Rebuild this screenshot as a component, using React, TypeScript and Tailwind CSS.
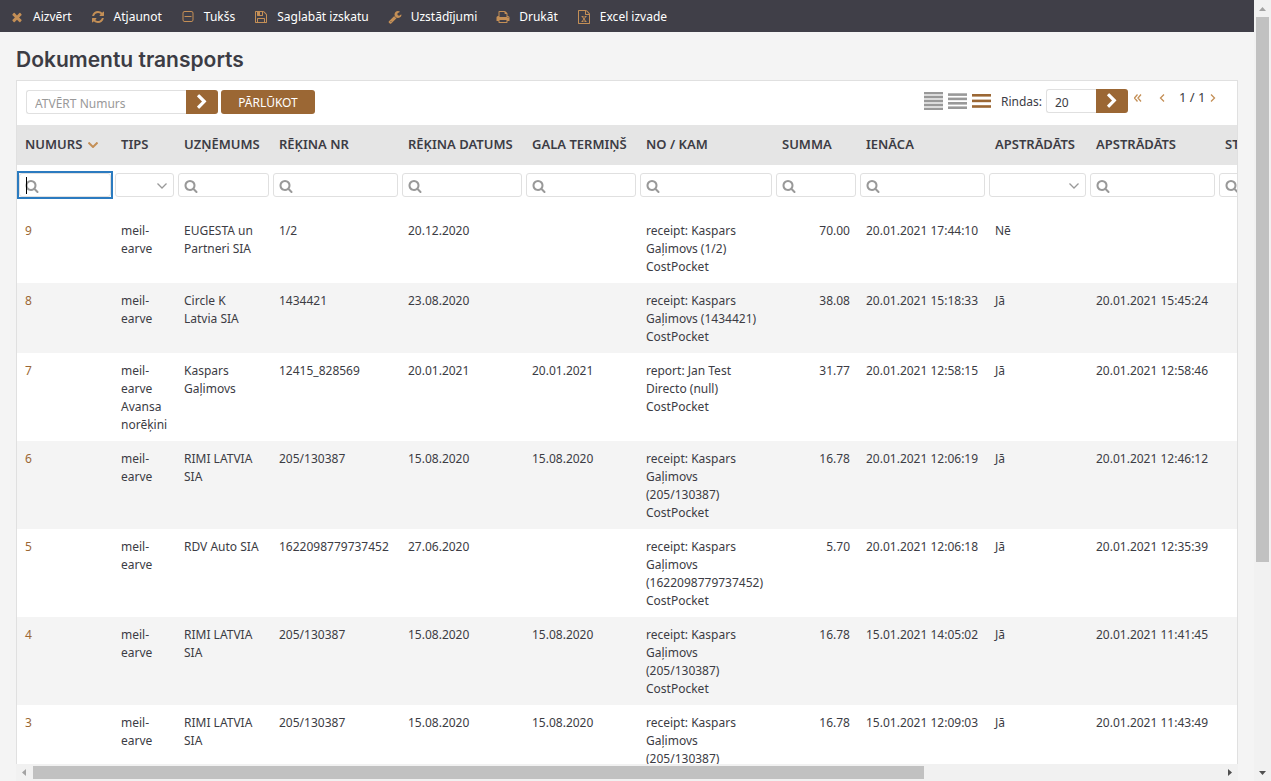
import React from "react";

const ICONS = {
  times: "M1490 1322q0 40-28 68l-136 136q-28 28-68 28t-68-28l-294-294-294 294q-28 28-68 28t-68-28l-136-136q-28-28-28-68t28-68l294-294-294-294q-28-28-28-68t28-68l136-136q28-28 68-28t68 28l294 294 294-294q28-28 68-28t68 28l136 136q28 28 28 68t-28 68l-294 294 294 294q28 28 28 68z",
  refresh: "M1639 1056q0 5-1 7-64 268-268 434.5t-478 166.5q-146 0-282.5-55t-243.5-157l-129 129q-19 19-45 19t-45-19-19-45v-448q0-26 19-45t45-19h448q26 0 45 19t19 45-19 45l-137 137q71 66 161 102t187 36q134 0 250-65t186-179q11-17 53-117 8-23 30-23h192q13 0 22.5 9.5t9.5 22.5zm25-800v448q0 26-19 45t-45 19h-448q-26 0-45-19t-19-45 19-45l138-138q-148-137-349-137-134 0-250 65t-186 179q-11 17-53 117-8 23-30 23h-199q-13 0-22.5-9.5t-9.5-22.5v-7q65-268 270-434.5t480-166.5q146 0 284 55.5t245 156.5l130-129q19-19 45-19t45 19 19 45z",
  minusSquare: "M1344 800v64q0 14-9 23t-23 9h-832q-14 0-23-9t-9-23v-64q0-14 9-23t23-9h832q14 0 23 9t9 23zm128 448v-832q0-66-47-113t-113-47h-832q-66 0-113 47t-47 113v832q0 66 47 113t113 47h832q66 0 113-47t47-113zm128-832v832q0 119-84.5 203.5t-203.5 84.5h-832q-119 0-203.5-84.5t-84.5-203.5v-832q0-119 84.5-203.5t203.5-84.5h832q119 0 203.5 84.5t84.5 203.5z",
  floppy: "M512 1536h768v-384h-768v384zm896 0h128v-896q0-14-10-38.5t-20-34.5l-281-281q-10-10-34-20t-39-10v416q0 40-28 68t-68 28h-576q-40 0-68-28t-28-68v-416h-128v1280h128v-416q0-40 28-68t68-28h832q40 0 68 28t28 68v416zm-384-928v-320q0-13-9.5-22.5t-22.5-9.5h-192q-13 0-22.5 9.5t-9.5 22.5v320q0 13 9.5 22.5t22.5 9.5h192q13 0 22.5-9.5t9.5-22.5zm640 32v928q0 40-28 68t-68 28h-1344q-40 0-68-28t-28-68v-1344q0-40 28-68t68-28h928q40 0 88 20t76 48l280 280q28 28 48 76t20 88z",
  wrench: "M448 1472q0-26-19-45t-45-19-45 19-19 45 19 45 45 19 45-19 19-45zm644-420l-682 682q-37 37-90 37-52 0-91-37l-106-108q-38-36-38-90 0-53 38-91l681-681q39 98 114.5 173.5t173.5 114.5zm634-435q0 39-23 106-47 134-164.5 217.5t-258.5 83.5q-185 0-316.5-131.5t-131.5-316.5 131.5-316.5 316.5-131.5q58 0 121.5 16.5t107.5 46.5q16 11 16 28t-16 28l-293 169v224l193 107q5-3 79-48.5t135.5-81 70.5-35.5q15 0 23.5 10t8.5 25z",
  print: "M448 1536h896v-256h-896v256zm0-640h896v-384h-160q-40 0-68-28t-28-68v-160h-640v640zm1152 64q0-26-19-45t-45-19-45 19-19 45 19 45 45 19 45-19 19-45zm128 0v416q0 13-9.5 22.5t-22.5 9.5h-224v160q0 40-28 68t-68 28h-960q-40 0-68-28t-28-68v-160h-224q-13 0-22.5-9.5t-9.5-22.5v-416q0-79 56.5-135.5t135.5-56.5h64v-544q0-40 28-68t68-28h672q40 0 88 20t76 48l152 152q28 28 48 76t20 88v256h64q79 0 135.5 56.5t56.5 135.5z",
  excel: "M1596 380q28 28 48 76t20 88v1152q0 40-28 68t-68 28h-1344q-40 0-68-28t-28-68v-1600q0-40 28-68t68-28h896q40 0 88 20t76 48zm-444-244v376h376q-10-29-22-41l-313-313q-12-12-41-22zm384 1528v-1024h-416q-40 0-68-28t-28-68v-416h-768v1536h1280zm-979-234v106h281v-106h-75l103-161q5-7 10-16.5t7.5-13.5 3.5-4h2q1 4 5 10 2 4 4.5 7.5t6 8 6.5 8.5l107 161h-76v106h291v-106h-68l-192-273 195-282h67v-107h-279v107h74l-103 159q-4 7-10 16.5t-9 13.5l-2 3h-2q-1-4-5-10-6-11-17-23l-106-159h76v-107h-290v107h68l189 272-194 283h-68z",
  search: "M1216 832q0-185-131.5-316.5t-316.5-131.5-316.5 131.5-131.5 316.5 131.5 316.5 316.5 131.5 316.5-131.5 131.5-316.5zm512 832q0 52-38 90t-90 38q-54 0-90-38l-343-342q-179 124-399 124-143 0-273.5-55.5t-225-150-150-225-55.5-273.5 55.5-273.5 150-225 225-150 273.5-55.5 273.5 55.5 225 150 150 225 55.5 273.5q0 220-124 399l343 343q37 37 37 90z",
  chevron: "M1363 877l-742 742q-19 19-45 19t-45-19l-166-166q-19-19-19-45t19-45l531-531-531-531q-19-19-19-45t19-45l166-166q19-19 45-19t45 19l742 742q19 19 19 45t-19 45z",
};

function Icon({ name, className }: { name: keyof typeof ICONS; className: string }) {
  return (
    <svg viewBox="0 0 1792 1792" fill="currentColor" aria-hidden="true" className={className}>
      <path d={ICONS[name]} />
    </svg>
  );
}

function Line({ d, box, className }: { d: string; box: string; className: string }) {
  return (
    <svg viewBox={box} fill="none" stroke="currentColor" strokeWidth="1.3" aria-hidden="true" className={className}>
      <path d={d} />
    </svg>
  );
}

const ACTIONS: { icon: keyof typeof ICONS; label: string }[] = [
  { icon: "times", label: "Aizvērt" },
  { icon: "refresh", label: "Atjaunot" },
  { icon: "minusSquare", label: "Tukšs" },
  { icon: "floppy", label: "Saglabāt izskatu" },
  { icon: "wrench", label: "Uzstādījumi" },
  { icon: "print", label: "Drukāt" },
  { icon: "excel", label: "Excel izvade" },
];

const COLUMNS: { label: string; col: string; filter: "text" | "select" }[] = [
  { label: "NUMURS", col: "w-[96px]", filter: "text" },
  { label: "TIPS", col: "w-[63px]", filter: "select" },
  { label: "UZŅĒMUMS", col: "w-[95px]", filter: "text" },
  { label: "RĒĶINA NR", col: "w-[129px]", filter: "text" },
  { label: "RĒĶINA DATUMS", col: "w-[124px]", filter: "text" },
  { label: "GALA TERMIŅŠ", col: "w-[114px]", filter: "text" },
  { label: "NO / KAM", col: "w-[136px]", filter: "text" },
  { label: "SUMMA", col: "w-[84px]", filter: "text" },
  { label: "IENĀCA", col: "w-[129px]", filter: "text" },
  { label: "APSTRĀDĀTS", col: "w-[101px]", filter: "select" },
  { label: "APSTRĀDĀTS", col: "w-[129px]", filter: "text" },
  { label: "STATUSS", col: "w-[431px]", filter: "text" },
];

const ROWS: string[][] = [
  ["9", "meil-\nearve", "EUGESTA un\nPartneri SIA", "1/2", "20.12.2020", "", "receipt: Kaspars\nGaļimovs (1/2)\nCostPocket", "70.00", "20.01.2021 17:44:10", "Nē", ""],
  ["8", "meil-\nearve", "Circle K\nLatvia SIA", "1434421", "23.08.2020", "", "receipt: Kaspars\nGaļimovs (1434421)\nCostPocket", "38.08", "20.01.2021 15:18:33", "Jā", "20.01.2021 15:45:24"],
  ["7", "meil-\nearve\nAvansa\nnorēķini", "Kaspars\nGaļimovs", "12415_828569", "20.01.2021", "20.01.2021", "report: Jan Test\nDirecto (null)\nCostPocket", "31.77", "20.01.2021 12:58:15", "Jā", "20.01.2021 12:58:46"],
  ["6", "meil-\nearve", "RIMI LATVIA\nSIA", "205/130387", "15.08.2020", "15.08.2020", "receipt: Kaspars\nGaļimovs\n(205/130387)\nCostPocket", "16.78", "20.01.2021 12:06:19", "Jā", "20.01.2021 12:46:12"],
  ["5", "meil-\nearve", "RDV Auto SIA", "1622098779737452", "27.06.2020", "", "receipt: Kaspars\nGaļimovs\n(1622098779737452)\nCostPocket", "5.70", "20.01.2021 12:06:18", "Jā", "20.01.2021 12:35:39"],
  ["4", "meil-\nearve", "RIMI LATVIA\nSIA", "205/130387", "15.08.2020", "15.08.2020", "receipt: Kaspars\nGaļimovs\n(205/130387)\nCostPocket", "16.78", "15.01.2021 14:05:02", "Jā", "20.01.2021 11:41:45"],
  ["3", "meil-\nearve", "RIMI LATVIA\nSIA", "205/130387", "15.08.2020", "15.08.2020", "receipt: Kaspars\nGaļimovs\n(205/130387)\nCostPocket", "16.78", "15.01.2021 12:09:03", "Jā", "20.01.2021 11:43:49"],
];

function Toolbar() {
  return (
    <nav className="flex h-8 shrink-0 items-center gap-[19px] bg-[#403f48] pt-px pl-[10px]">
      {ACTIONS.map((a) => (
        <button key={a.label} type="button" className="flex items-center gap-[9px] text-[12px] leading-[18px] whitespace-nowrap text-white">
          <Icon name={a.icon} className="size-[14px] text-[#c48f56]" />
          {a.label}
        </button>
      ))}
    </nav>
  );
}

function Bars({ tops, height, back }: { tops: number[]; height: number; back?: boolean }) {
  return (
    <svg viewBox="0 0 19 18" className="h-[18px] w-[19px]" fill="currentColor" aria-hidden="true">
      {back && <rect x="0" y="0" width="19" height="18" opacity="0.35" />}
      {tops.map((y) => (
        <rect key={y} x="0" y={y} width="19" height={height} />
      ))}
    </svg>
  );
}

function Density() {
  return (
    <div className="flex gap-[5px] text-[#999]">
      <button type="button" aria-label="Blīvs skats">
        <Bars tops={[0, 4, 8, 12, 16]} height={2} back />
      </button>
      <button type="button" aria-label="Vidējs skats">
        <Bars tops={[1.3, 5.6, 10, 14.4]} height={2.6} />
      </button>
      <button type="button" aria-label="Plašs skats" className="text-[#9b6734]">
        <Bars tops={[2, 7.6, 13.2]} height={2.6} />
      </button>
    </div>
  );
}

function Controls() {
  return (
    <div className="flex h-11 shrink-0 items-start justify-between pr-[21px] pl-[9px]">
      <form className="flex pt-[9px]" onSubmit={(e) => e.preventDefault()}>
        <input
          aria-label="Atvērt numurs"
          placeholder="ATVĒRT Numurs"
          className="h-6 w-[160px] rounded-l-[3px] border border-r-0 border-[#e0e0e0] bg-white px-2 pt-[2px] text-[12px] placeholder:text-[#999] focus:outline-none"
        />
        <button type="submit" aria-label="Atvērt" className="flex h-6 w-8 items-center justify-center rounded-r-[3px] bg-[#9b6734] text-white">
          <Icon name="chevron" className="size-4" />
        </button>
        <button type="button" className="ml-[3px] h-6 w-[94px] rounded-[3px] bg-[#9b6734] pt-px text-[12px] text-white">
          PĀRLŪKOT
        </button>
      </form>
      <div className="flex items-start pt-2">
        <div className="flex h-6 items-center">
          <Density />
          <label htmlFor="rows" className="mr-1 ml-[10px] pt-px text-[12px]">
            Rindas:
          </label>
          <input id="rows" defaultValue="20" className="h-6 w-[50px] rounded-l-[3px] border border-r-0 border-[#e0e0e0] bg-white px-2 pt-[2px] text-[12px] focus:outline-none" />
          <button type="button" aria-label="Rādīt" className="flex h-6 w-8 items-center justify-center rounded-r-[3px] bg-[#9b6734] text-white">
            <Icon name="chevron" className="size-4" />
          </button>
        </div>
        <div className="flex h-[18px] items-center text-[13px] text-[#c48f56]">
          <button type="button" aria-label="Pirmā lapa" className="ml-[6px]">
            <Line box="0 0 8 8" d="M3.5 0.5L0.5 4L3.5 7.5M7 0.5L4 4L7 7.5" className="size-2" />
          </button>
          <button type="button" aria-label="Iepriekšējā lapa" className="ml-[17px]">
            <Line box="0 0 6 8" d="M5 0.5L1.5 4L5 7.5" className="h-2 w-[6px]" />
          </button>
          <span className="mr-[5px] ml-[14px] w-[26px] whitespace-nowrap text-[#3c3c44]">1 / 1</span>
          <button type="button" aria-label="Nākamā lapa">
            <Line box="0 0 6 8" d="M1 0.5L4.5 4L1 7.5" className="h-2 w-[6px]" />
          </button>
        </div>
      </div>
    </div>
  );
}

function Filter({ kind, label, active }: { kind: "text" | "select"; label: string; active: boolean }) {
  if (kind === "select") {
    return (
      <div className="relative">
        <select aria-label={label} className="block h-6 w-full appearance-none rounded-[3px] border border-[#e0e0e0] bg-white">
          <option></option>
        </select>
        <Line box="0 0 10 6" d="M0.5 0.5L5 5L9.5 0.5" className="pointer-events-none absolute top-[10px] right-[7px] h-[6px] w-[10px] text-[#999]" />
      </div>
    );
  }
  return (
    <div className={active ? "relative outline-2 outline-[#2b7bc0]" : "relative"}>
      <input aria-label={label} className="block h-6 w-full rounded-[3px] border border-[#e0e0e0] bg-white pr-1 pl-[22px] focus:outline-none" />
      <Icon name="search" className="pointer-events-none absolute top-[6px] left-[6px] size-[14px] text-[#999]" />
      {active && <span className="absolute top-1 left-[7px] h-[17px] w-px bg-black" />}
    </div>
  );
}

function DocumentTable() {
  return (
    <table className="w-[1631px] table-fixed border-collapse text-[12px] leading-[18px]">
      <colgroup>
        {COLUMNS.map((c, i) => (
          <col key={i} className={c.col} />
        ))}
      </colgroup>
      <thead>
        <tr className="h-10 bg-[#e5e5e5] text-left">
          {COLUMNS.map((c, i) => (
            <th key={i} scope="col" className="p-0 pb-[2px] pl-2 text-[13px] font-semibold whitespace-nowrap">
              {c.label}
              {i === 0 && <Line box="0 0 10 6" d="M0.5 0.5L5 5L9.5 0.5" className="ml-[6px] inline-block h-[6px] w-[10px] stroke-2 text-[#c48f56]" />}
            </th>
          ))}
        </tr>
        <tr className="h-12">
          {COLUMNS.map((c, i) => (
            <td key={i} className="px-[2px] pt-2 pb-4 align-top">
              <Filter kind={c.filter} label={c.label} active={i === 0} />
            </td>
          ))}
        </tr>
      </thead>
      <tbody>
        {ROWS.map((row) => (
          <tr key={row[0]} className="align-top even:bg-[#f4f4f4]">
            {row.map((cell, i) => (
              <td key={i} className={i === 7 ? "px-2 pt-[9px] pb-[7px] text-right" : "pt-[9px] pb-[7px] pl-2 whitespace-pre"}>
                {i === 0 ? (
                  <a href="#" className="text-[#9b6734]">
                    {cell}
                  </a>
                ) : (
                  cell
                )}
              </td>
            ))}
            <td />
          </tr>
        ))}
      </tbody>
    </table>
  );
}

function Arrow({ d, className }: { d: string; className: string }) {
  return (
    <svg viewBox="0 0 17 17" fill="currentColor" aria-hidden="true" className={className}>
      <path d={d} />
    </svg>
  );
}

export default function App() {
  return (
    <div className="flex h-screen overflow-hidden bg-[#f4f4f4] font-['Noto_Sans',sans-serif] text-[#3c3c44]">
      <div className="flex min-w-0 flex-1 flex-col">
        <Toolbar />
        <main className="flex min-h-0 flex-1 flex-col px-4">
          <h1 className="pt-4 pb-2 font-['Inter',sans-serif] text-[21px] leading-6 font-semibold">Dokumentu transports</h1>
          <section className="flex min-h-0 flex-1 flex-col">
            <div className="flex min-h-0 flex-1 flex-col border border-b-0 border-[#e0e0e0] bg-white">
              <Controls />
              <div className="min-h-0 flex-1 overflow-hidden">
                <DocumentTable />
              </div>
            </div>
            <div className="flex h-[17px] shrink-0 items-center bg-[#f1f1f1]" aria-hidden="true">
              <Arrow d="M10 5v7L6 8.500z" className="size-[17px] text-[#a3a3a3]" />
              <div className="flex-1">
                <div className="h-[13px] w-3/4 bg-[#c1c1c1]" />
              </div>
              <Arrow d="M7 5v7L11 8.500z" className="size-[17px] text-[#505050]" />
            </div>
          </section>
        </main>
      </div>
      <div className="flex w-[17px] shrink-0 flex-col items-center bg-[#f1f1f1]" aria-hidden="true">
        <Arrow d="M5 11h7L8.500 7z" className="size-[17px] text-[#a3a3a3]" />
        <div className="w-[13px] flex-1">
          <div className="h-[73%] bg-[#c1c1c1]" />
        </div>
        <Arrow d="M5 7h7L8.500 11z" className="size-[17px] text-[#505050]" />
      </div>
    </div>
  );
}
